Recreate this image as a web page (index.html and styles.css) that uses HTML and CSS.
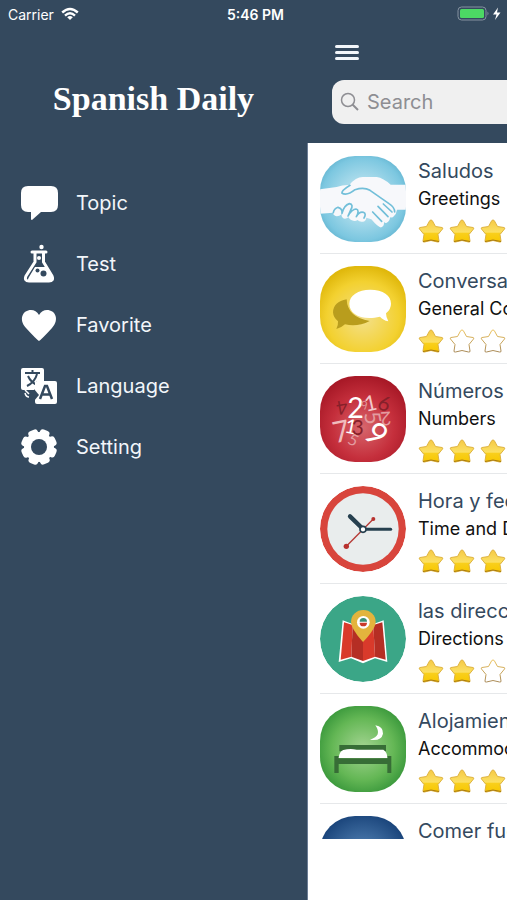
FILE: index.html
```
<!DOCTYPE html>
<html lang="en">
<head>
    <meta charset="utf-8">
    <meta name="viewport" content="width=device-width, initial-scale=1">
    <title>Spanish Daily</title>
    <link rel="stylesheet" href="styles.css">
</head>
<body>
    <!-- shared star shapes -->
    <svg class="defs" width="0" height="0" aria-hidden="true">
        <defs>
            <linearGradient id="gold" x1="0" y1="0" x2="0" y2="1">
                <stop offset="0" stop-color="#f6c944"/>
                <stop offset="0.55" stop-color="#fbe063"/>
                <stop offset="0.6" stop-color="#f9cf1c"/>
                <stop offset="1" stop-color="#f7c800"/>
            </linearGradient>
            <linearGradient id="goldline" x1="0" y1="0" x2="0" y2="1">
                <stop offset="0" stop-color="#ecc25c"/>
                <stop offset="1" stop-color="#a98a58"/>
            </linearGradient>
            <radialGradient id="blue" r="0.6"><stop offset="0.3" stop-color="#b5e0ee"/><stop offset="0.8" stop-color="#7cc7e0"/><stop offset="1" stop-color="#5aaecb"/></radialGradient>
            <radialGradient id="yellow" cy="0.6" r="0.6"><stop offset="0" stop-color="#f3e08c"/><stop offset="0.7" stop-color="#f3d130"/><stop offset="1" stop-color="#e0b80c"/></radialGradient>
            <radialGradient id="red" cy="0.6" r="0.6"><stop offset="0" stop-color="#d7666c"/><stop offset="0.6" stop-color="#c52f3c"/><stop offset="1" stop-color="#a81927"/></radialGradient>
            <radialGradient id="green" r="0.6"><stop offset="0" stop-color="#a5d593"/><stop offset="0.6" stop-color="#64b755"/><stop offset="1" stop-color="#2f9035"/></radialGradient>
            <radialGradient id="navy" r="0.6"><stop offset="0" stop-color="#5f8fc0"/><stop offset="1" stop-color="#123c73"/></radialGradient>
            <path id="star-shape" d="M13 2 Q14 2 14.500 3 L17.500 8.500 L24 9.500 Q25.500 10 24.500 11 L20 16.500 L21 23 Q21 24.500 19.500 24 L13 22.500 L6.500 24 Q5 24.500 5 23 L6 16.500 L1.500 11 Q.5 10 2 9.500 L8.500 8.500 L11.500 3 Q12 2 13 2Z"/>
            <symbol id="star" viewBox="0 0 26 26">
                <use href="#star-shape" fill="url(#gold)" stroke="#deb340"/>
                <path d="M5 23.500 L13 22 L21 23.500" fill="none" stroke="#a97a12"/>
            </symbol>
            <symbol id="star-empty" viewBox="0 0 26 26">
                <use href="#star-shape" fill="#fff" stroke="url(#goldline)"/>
            </symbol>
        </defs>
    </svg>

    <div class="status-bar">
        <div class="carrier">
            <span>Carrier</span>
            <svg width="18" height="14" viewBox="0 0 18 14" fill="none" stroke="#fff" stroke-width="2.400">
                <path d="M1.200 5.500 Q9 -1.500 16.800 5.500"/>
                <path d="M4 8.600 Q9 4 14 8.600"/>
                <path d="M9 13 L6.200 10.200 Q9 8 11.800 10.200Z" fill="#fff" stroke="none"/>
            </svg>
        </div>
        <div class="time">5:46 PM</div>
        <div class="battery">
            <svg width="46" height="16" viewBox="0 0 46 16">
                <rect x="1" y="1" width="28" height="13" rx="3.500" fill="none" stroke="#8592a0"/>
                <rect x="3" y="3" width="24" height="9" rx="1.500" fill="#4cd964"/>
                <path d="M30.500 5.500 Q32.500 7.500 30.500 9.500Z" fill="#8592a0"/>
                <path d="M41 1.500 L36 8.500 H39.500 L38 14 L43.500 6.500 H40Z" fill="#fff"/>
            </svg>
        </div>
    </div>

    <div class="app">
        <nav class="drawer">
            <h1>Spanish Daily</h1>
            <a href="#topic">
                <svg viewBox="0 0 38 38"><path d="M8 2 H31 Q38 2 38 9 V21 Q38 28 31 28 H21 L12 36 Q11 36 11 35 V28 H8 Q1 28 1 21 V9 Q1 2 8 2Z" fill="#fff"/></svg>
                Topic
            </a>
            <a href="#test">
                <svg viewBox="0 0 38 38">
                    <circle cx="21.500" cy="2" r="2.200" fill="#fff"/>
                    <path d="M12 7 H26 M15 8 V17 L6 31 Q4 36 9 36 H29 Q34 36 32 31 L23.500 17 V8" fill="none" stroke="#fff" stroke-width="3" stroke-linecap="round" stroke-linejoin="round"/>
                    <path d="M15 22 H26 L32 32 Q33 36 29 36 H9 Q7 35 9 32Z" fill="#fff"/>
                    <circle cx="19" cy="13" r="2" fill="#fff"/>
                    <circle cx="17.500" cy="25.500" r="2" fill="#34495e"/>
                    <circle cx="23.500" cy="28.500" r="3" fill="#34495e"/>
                </svg>
                Test
            </a>
            <a href="#favorite">
                <svg viewBox="0 0 38 38"><path d="M19 35 Q17 34 6 22 C-2 13 3 4 11 4 Q16 4 19 9 Q22 4 27 4 C35 4 40 13 32 22 Q21 34 19 35Z" fill="#fff"/></svg>
                Favorite
            </a>
            <a href="#language">
                <svg viewBox="0 0 38 38">
                    <path d="M3 1 H22 Q24 1 24 3 V14 H16 V23 H3 Q1 23 1 21 V3 Q1 1 3 1Z" fill="#fff"/>
                    <g fill="none" stroke="#34495e" stroke-width="2">
                        <path d="M5 6 H20 M12.500 3 V6 M7 19 Q15 15 17 7 M8 9 Q11 16 18 18"/>
                    </g>
                    <rect x="15" y="14" width="22" height="23" rx="2" fill="#fff"/>
                    <path d="M14 22 L19 28 L14 34Z" fill="#34495e"/>
                    <path d="M5 23 L9 27 M5 26 Q6 30 9 30" fill="none" stroke="#fff" stroke-width="1.500"/>
                    <path d="M20 32 L25 19 H27 L32 32 M22 27.500 H30" fill="none" stroke="#34495e" stroke-width="2.500"/>
                </svg>
                Language
            </a>
            <a href="#setting">
                <svg viewBox="0 0 38 38">
                    <g fill="#fff">
                        <rect x="14" y="1" width="10" height="36" rx="3" transform="rotate(22 19 19)"/>
                        <rect x="14" y="1" width="10" height="36" rx="3" transform="rotate(67 19 19)"/>
                        <rect x="14" y="1" width="10" height="36" rx="3" transform="rotate(112 19 19)"/>
                        <rect x="14" y="1" width="10" height="36" rx="3" transform="rotate(157 19 19)"/>
                        <circle cx="19" cy="19" r="15"/>
                    </g>
                    <circle cx="19" cy="19" r="8" fill="#34495e"/>
                </svg>
                Setting
            </a>
        </nav>

        <main class="page">
            <header>
                <button class="menu-button" aria-label="Menu"><span></span><span></span><span></span></button>
                <label class="search">
                    <svg width="20" height="20" viewBox="0 0 20 20" fill="none" stroke="#8e8e93"><circle cx="8" cy="8" r="6.500" stroke-width="1.500"/><path d="M12.500 12.500 L18 18" stroke-width="2"/></svg>
                    <input type="search" placeholder="Search" aria-label="Search">
                </label>
            </header>

            <ul class="topics">
                <li>
                    <svg class="icon" viewBox="0 0 258 258">
                        <rect width="258" height="258" fill="url(#blue)"/>
                        <path d="M0 100 L50 93 Q70 86 88 87 Q108 62 130 63 H170 Q190 66 212 86 H258 V161 H231 Q229 174 222 180 Q218 186 210 184 Q210 196 200 200 Q196 202 192 198 Q193 211 184 214 Q176 216 154 190 L139 185 Q138 196 128 197 Q120 199 112 192 Q106 198 94 192 Q88 190 86 184 Q74 192 68 185 Q62 179 66 174 Q52 185 43 178 Q37 174 40 170 L0 173Z" fill="#f7f8fb"/>
                        <g fill="none" stroke="#72bfd9" stroke-width="5" stroke-linecap="round" stroke-linejoin="round">
                            <path d="M90 88 Q64 104 66 112 Q82 120 105 101 Q132 92 150 103 L207 143 Q224 154 224 168"/>
                            <path d="M40 170 Q42 158 54 154 Q68 158 66 172 Q72 148 88 143 Q102 145 92 162 L84 180 Q96 160 108 159 Q120 162 109 182 Q118 166 130 169 Q140 173 132 186"/>
                            <path d="M158 168 L185 196 M174 151 L204 182 M190 144 L216 168"/>
                        </g>
                    </svg>
                    <div class="text">
                        <h2>Saludos</h2>
                        <p>Greetings</p>
                        <div class="stars"><svg><use href="#star"/></svg><svg><use href="#star"/></svg><svg><use href="#star"/></svg></div>
                    </div>
                </li>
                <li>
                    <svg class="icon" viewBox="0 0 258 258">
                        <rect width="258" height="258" fill="url(#yellow)"/>
                        <path d="M80 100 Q40 108 39 139 Q40 155 54 166 Q55 178 49 189 Q66 184 75 175 Q112 184 149 165 Q82 154 80 100Z" fill="#b99d1d"/>
                        <path d="M150 71 C190 71 213 88 213 113 Q213 130 198 142 Q198 154 205 166 Q188 162 180 152 C125 164 88 145 88 113 C88 88 115 71 150 71Z" fill="#fff"/>
                    </svg>
                    <div class="text">
                        <h2>Conversación general</h2>
                        <p>General Conversation</p>
                        <div class="stars"><svg><use href="#star"/></svg><svg><use href="#star-empty"/></svg><svg><use href="#star-empty"/></svg></div>
                    </div>
                </li>
                <li>
                    <svg class="icon digits" viewBox="0 0 258 258">
                        <rect width="258" height="258" fill="url(#red)"/>
                        <text x="82" y="125" font-size="86" fill="#fff">2</text>
                        <text x="133" y="104" font-size="64" fill="#f3c9cb" transform="rotate(-12 150 80)">1</text>
                        <text x="123" y="100" font-size="36" fill="#e09498" transform="rotate(-15 135 85)">9</text>
                        <text x="50" y="112" font-size="58" fill="#86202a" transform="rotate(170 66 93)">4</text>
                        <text x="175" y="104" font-size="62" fill="#86202a" transform="rotate(20 192 83)">6</text>
                        <text x="38" y="198" font-size="88" fill="#f0bcbd" transform="rotate(-12 60 168)">7</text>
                        <text x="75" y="172" font-size="60" fill="#fff" transform="rotate(12 90 152)">1</text>
                        <text x="95" y="177" font-size="62" fill="#86202a">3</text>
                        <text x="136" y="146" font-size="66" fill="#e39ca0" transform="rotate(80 155 126)">5</text>
                        <text x="182" y="146" font-size="56" fill="#e39ca0" transform="rotate(175 198 127)">2</text>
                        <text x="142" y="206" font-size="96" fill="#fff" transform="rotate(42 167 172)">9</text>
                        <text x="86" y="208" font-size="48" fill="#e39ca0" transform="rotate(28 98 192)">5</text>
                    </svg>
                    <div class="text">
                        <h2>Números</h2>
                        <p>Numbers</p>
                        <div class="stars"><svg><use href="#star"/></svg><svg><use href="#star"/></svg><svg><use href="#star"/></svg></div>
                    </div>
                </li>
                <li>
                    <svg class="icon round" viewBox="0 0 258 258">
                        <circle cx="129" cy="129" r="129" fill="#d8453c"/>
                        <circle cx="129" cy="129" r="107" fill="#e9eded"/>
                        <g stroke="#26404f" stroke-linecap="round">
                            <path d="M129 129 L90 91" stroke-width="13"/>
                            <path d="M129 130 H212" stroke-width="9"/>
                        </g>
                        <path d="M79 181 L160 99" stroke="#b53a35" stroke-width="4"/>
                        <circle cx="79" cy="181" r="8" fill="#b8322f"/>
                        <circle cx="160" cy="99" r="6" fill="#b8322f"/>
                        <circle cx="129" cy="130" r="9" fill="#fff" stroke="#26404f" stroke-width="5"/>
                    </svg>
                    <div class="text">
                        <h2>Hora y fecha</h2>
                        <p>Time and Date</p>
                        <div class="stars"><svg><use href="#star"/></svg><svg><use href="#star"/></svg><svg><use href="#star"/></svg></div>
                    </div>
                </li>
                <li>
                    <svg class="icon round" viewBox="0 0 258 258">
                        <circle cx="129" cy="129" r="129" fill="#3ba687"/>
                        <path d="M68 73 L98 84 L129 73 L160 84 L191 73 L202 198 L165 187 L129 202 L93 187 L56 198Z" fill="#fff"/>
                        <path d="M72 79 L98 87 L94 182 L62 191Z" fill="#d93a2b"/>
                        <path d="M98 87 L129 79 V195 L94 182Z" fill="#b52e24"/>
                        <path d="M129 79 L160 87 L165 182 L129 195Z" fill="#d93a2b"/>
                        <path d="M160 87 L187 79 L197 191 L165 182Z" fill="#b52e24"/>
                        <path d="M129 138 Q93 98 93 77 A37 35 0 0 1 167 77 Q167 98 129 138Z" fill="#e3b43d"/>
                        <circle cx="130" cy="79" r="19" fill="#fff"/>
                        <path d="M119 77 A11 11 0 0 1 141 77Z" fill="#3b8f75"/>
                        <path d="M119 80 A11 11 0 0 0 141 80Z" fill="#c93a2b"/>
                    </svg>
                    <div class="text">
                        <h2>las direcciones</h2>
                        <p>Directions</p>
                        <div class="stars"><svg><use href="#star"/></svg><svg><use href="#star"/></svg><svg><use href="#star-empty"/></svg></div>
                    </div>
                </li>
                <li>
                    <svg class="icon" viewBox="0 0 258 258">
                        <rect width="258" height="258" fill="url(#green)"/>
                        <path d="M166 58 Q190 62 189 83 Q184 106 150 101 Q188 90 166 58Z" fill="#fff"/>
                        <path d="M58 117 H198 V136 H58Z M43 150 H56 V157 H202 V150 H214 V201 H202 V174 H56 V201 H43Z" fill="#376d36"/>
                        <path d="M56 156 Q58 136 70 132 Q90 127 110 131 H190 Q202 138 202 156Z" fill="#fff"/>
                    </svg>
                    <div class="text">
                        <h2>Alojamiento</h2>
                        <p>Accommodation</p>
                        <div class="stars"><svg><use href="#star"/></svg><svg><use href="#star"/></svg><svg><use href="#star"/></svg></div>
                    </div>
                </li>
                <li>
                    <svg class="icon" viewBox="0 0 258 258">
                        <rect width="258" height="258" fill="url(#navy)"/>
                    </svg>
                    <div class="text">
                        <h2>Comer fuera</h2>
                    </div>
                </li>
            </ul>
            <div class="banner"></div>
        </main>
    </div>
</body>
</html>
```
FILE: styles.css
```
* { box-sizing: border-box; }
body { margin: 0; height: 100vh; display: flex; flex-direction: column; overflow: hidden; background: #34495e; color: #fff; font-family: Inter, "Liberation Sans", sans-serif; }
h1, h2, p, ul { margin: 0; padding: 0; }
.defs { position: absolute; }

.status-bar { display: grid; grid-template-columns: 1fr auto 1fr; align-items: center; height: 28px; padding: 0 4px 0 8px; font-size: 14px; }
.carrier { display: flex; align-items: center; gap: 7px; }
.time { font-weight: 600; }
.battery { display: flex; justify-content: flex-end; }

.app { flex: 1; display: flex; min-height: 0; overflow: hidden; }

.drawer { flex: 0 0 307px; }
.drawer h1 { margin: 50px 0 52px; text-align: center; font: bold 34px/42px "Liberation Serif", serif; }
.drawer a { display: flex; align-items: center; gap: 18px; height: 61px; padding-left: 20px; color: #f2f6fa; font-size: 20px; text-decoration: none; }
.drawer svg { width: 38px; height: 38px; overflow: visible; }

/* the page keeps its full width and is pushed out by the drawer */
.page { flex: 0 0 100%; display: flex; flex-direction: column; min-height: 0; }
header { padding: 12px 25px 19px; }
.menu-button { display: flex; flex-direction: column; justify-content: center; gap: 3px; width: 30px; height: 24px; margin-bottom: 16px; padding: 0 3px; border: 0; background: none; cursor: pointer; }
.menu-button span { height: 3px; border-radius: 2px; background: #f2f6fa; }
.search { display: flex; align-items: center; gap: 6px; height: 44px; padding: 0 8px; border-radius: 12px; background: #f0f0f0; }
.search input { flex: 1; padding: 0 1px; border: 0; outline: 0; background: none; color: #333; font: 20px Inter, sans-serif; }
.search input::placeholder { color: #8e8e93; }

.topics, .banner { border-left: 1px solid #6c7d95; background: #fff; }
.topics { flex: 1; min-height: 0; padding-top: 1px; overflow: hidden; list-style: none; }
.topics li { display: flex; gap: 12px; height: 110px; margin-left: 12px; padding-top: 12px; border-bottom: 1px solid #e6e8ea; }
.banner { height: 61px; }
.icon { flex: none; width: 86px; height: 86px; border-radius: 35px; }
.icon.round { border-radius: 50%; }
.digits { font-family: Lato, "Liberation Sans", sans-serif; }
.text { white-space: nowrap; }
.text h2 { color: #34495e; font-size: 20px; line-height: 30px; font-weight: 400; }
.text p { color: #111; font-size: 18px; line-height: 26px; }
.stars { display: flex; gap: 5px; margin-top: 6px; }
.stars svg { width: 26px; height: 26px; }
```
